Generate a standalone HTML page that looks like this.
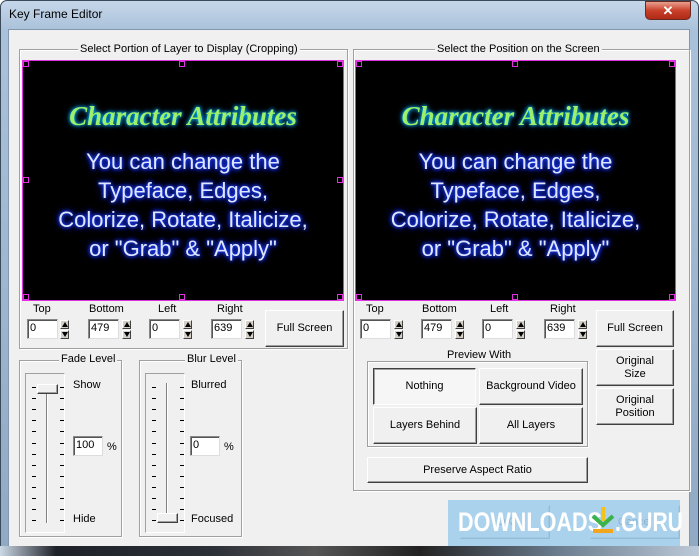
<!DOCTYPE html>
<html><head><style>
*{box-sizing:border-box;margin:0;padding:0}
body{width:699px;height:556px;overflow:hidden;background:#fff;font-family:"Liberation Sans",sans-serif;font-size:11px;color:#000;position:relative}
.a{position:absolute}
.win{left:0;top:0;width:699px;height:556px;background:linear-gradient(#c6d7e9,#a9c1da 30px,#a9c0d8 60px,#90a9c4);border-radius:7px 7px 0 0;border:1px solid #3a4a5a}
.client{left:8px;top:29px;width:682px;height:518px;background:#f0f0f0;border:1px solid #8297ad}
.bottom{left:0;top:546px;width:699px;height:10px;background:linear-gradient(90deg,#cbd8e6,#1e2128 8%,#2b2f36 30%,#555 45%,#222 60%,#6b7d8f 80%,#bcc9d8)}
.grp{border:1px solid #a0a0a0;box-shadow:1px 1px 0 #fff inset,1px 1px 0 #fff}
.lg{background:#f0f0f0;padding:0 2px;white-space:nowrap}
.prev{background:#000;border:1px solid #e030e0}
.h{position:absolute;width:6px;height:6px;border:1px solid #e030e0}
.t{position:absolute;left:0;width:100%;text-align:center;white-space:nowrap}
.ca{font-family:"Liberation Serif",serif;font-style:italic;font-weight:bold;font-size:27px;color:#9ef06a;text-shadow:0 0 3px #00c8ff,0 0 6px #0090ff}
.bl{font-size:22px;color:#dfe6ff;text-shadow:0 0 3px #2040ff,0 0 5px #2040ff,0 0 8px #0020ff}
.in{position:absolute;height:20px;width:31px;background:#fff;border:1px solid #888;border-right-color:#ddd;border-bottom-color:#ddd;box-shadow:inset 1px 1px 0 #555;padding:2px 2px;font-size:11px}
.sp{position:absolute;width:9px;height:20px}
.sp i{display:block;width:9px;height:9px;background:#d4d0c8;border:1px solid;border-color:#fff #404040 #404040 #fff;margin-bottom:1px;position:relative}
.sp i:after{content:"";position:absolute;left:1px;top:1px;border-left:3px solid transparent;border-right:3px solid transparent}
.sp i.u:after{border-bottom:5px solid #000}
.sp i.d:after{border-top:5px solid #000}
.btn{position:absolute;background:#f0f0f0;border:1px solid;border-color:#fff #404040 #404040 #fff;box-shadow:inset -1px -1px 0 #a0a0a0;display:flex;align-items:center;justify-content:center;text-align:center;font-size:11px;line-height:13px}
.lab{position:absolute;font-size:11px;white-space:nowrap}
.sl{border:1px solid;border-color:#a0a0a0 #fff #fff #a0a0a0}
.tick{position:absolute;width:4px;height:1px;background:#000}
.wm{position:absolute;font-size:27px;font-weight:bold;color:#fff;white-space:nowrap;transform-origin:0 0}
</style></head><body>
<div class="a win"></div>
<div class="a" style="left:9px;top:7px;font-size:12px;color:#000">Key Frame Editor</div>
<div class="a" style="left:645px;top:1px;width:46px;height:19px;border-radius:0 0 5px 5px;background:linear-gradient(#e8a090,#c9402a 50%,#b02a15);border:1px solid #6b2a20;color:#fff;font-weight:bold;font-size:13px;text-align:center;line-height:17px">✕</div>
<div class="a client"></div>
<div class="a bottom"></div>

<div class="a grp" style="left:19px;top:49px;width:329px;height:300px"></div>
<div class="a lg" style="left:78px;top:43px">Select Portion of Layer to Display (Cropping)</div>
<div class="a prev" style="left:22px;top:60px;width:322px;height:241px">
 <div class="h" style="left:0;top:0"></div><div class="h" style="left:156px;top:0"></div><div class="h" style="right:0;top:0"></div>
 <div class="h" style="left:0;top:116px"></div><div class="h" style="right:0;top:116px"></div>
 <div class="h" style="left:0;bottom:0"></div><div class="h" style="left:156px;bottom:0"></div><div class="h" style="right:0;bottom:0"></div>
 <div class="t ca" style="top:40px">Character Attributes</div>
 <div class="t bl" style="top:88px">You can change the</div>
 <div class="t bl" style="top:117px">Typeface, Edges,</div>
 <div class="t bl" style="top:146px">Colorize, Rotate, Italicize,</div>
 <div class="t bl" style="top:175px">or "Grab" &amp; "Apply"</div>
</div>
<div class="lab" style="left:33px;top:303px">Top</div>
<div class="lab" style="left:89px;top:303px">Bottom</div>
<div class="lab" style="left:158px;top:303px">Left</div>
<div class="lab" style="left:217px;top:303px">Right</div>
<div class="in" style="left:27px;top:319px">0</div><div class="sp" style="left:60px;top:320px"><i class="u"></i><i class="d"></i></div>
<div class="in" style="left:88px;top:319px">479</div><div class="sp" style="left:122px;top:320px"><i class="u"></i><i class="d"></i></div>
<div class="in" style="left:149px;top:319px">0</div><div class="sp" style="left:183px;top:320px"><i class="u"></i><i class="d"></i></div>
<div class="in" style="left:211px;top:319px">639</div><div class="sp" style="left:245px;top:320px"><i class="u"></i><i class="d"></i></div>
<div class="btn" style="left:265px;top:310px;width:79px;height:37px">Full Screen</div>

<div class="a grp" style="left:19px;top:360px;width:103px;height:177px"></div>
<div class="a lg" style="left:59px;top:353px">Fade Level</div>
<div class="a sl" style="left:25px;top:373px;width:40px;height:160px"></div>
<div class="a" style="left:46px;top:393px;width:2px;height:130px;border-left:1px solid #808080;border-right:1px solid #fff"></div>
<div class="btn" style="left:37px;top:384px;width:21px;height:10px"></div>
<div class="lab" style="left:73px;top:379px">Show</div>
<div class="lab" style="left:73px;top:513px">Hide</div>
<div class="in" style="left:73px;top:436px;width:30px">100</div>
<div class="lab" style="left:107px;top:441px">%</div>

<div class="a grp" style="left:139px;top:360px;width:103px;height:177px"></div>
<div class="a lg" style="left:185px;top:353px">Blur Level</div>
<div class="a sl" style="left:145px;top:373px;width:40px;height:160px"></div>
<div class="a" style="left:166px;top:383px;width:2px;height:135px;border-left:1px solid #808080;border-right:1px solid #fff"></div>
<div class="btn" style="left:157px;top:513px;width:21px;height:10px"></div>
<div class="lab" style="left:191px;top:379px">Blurred</div>
<div class="lab" style="left:191px;top:513px">Focused</div>
<div class="in" style="left:190px;top:436px;width:30px">0</div>
<div class="lab" style="left:224px;top:441px">%</div>

<div class="a grp" style="left:353px;top:49px;width:337px;height:442px"></div>
<div class="a lg" style="left:435px;top:43px">Select the Position on the Screen</div>
<div class="a prev" style="left:355px;top:60px;width:321px;height:241px">
 <div class="h" style="left:0;top:0"></div><div class="h" style="left:156px;top:0"></div><div class="h" style="right:0;top:0"></div>
 <div class="h" style="left:0;bottom:0"></div><div class="h" style="left:156px;bottom:0"></div><div class="h" style="right:0;bottom:0"></div>
 <div class="t ca" style="top:40px">Character Attributes</div>
 <div class="t bl" style="top:88px">You can change the</div>
 <div class="t bl" style="top:117px">Typeface, Edges,</div>
 <div class="t bl" style="top:146px">Colorize, Rotate, Italicize,</div>
 <div class="t bl" style="top:175px">or "Grab" &amp; "Apply"</div>
</div>
<div class="lab" style="left:366px;top:303px">Top</div>
<div class="lab" style="left:422px;top:303px">Bottom</div>
<div class="lab" style="left:490px;top:303px">Left</div>
<div class="lab" style="left:550px;top:303px">Right</div>
<div class="in" style="left:360px;top:319px">0</div><div class="sp" style="left:394px;top:320px"><i class="u"></i><i class="d"></i></div>
<div class="in" style="left:421px;top:319px">479</div><div class="sp" style="left:455px;top:320px"><i class="u"></i><i class="d"></i></div>
<div class="in" style="left:482px;top:319px">0</div><div class="sp" style="left:516px;top:320px"><i class="u"></i><i class="d"></i></div>
<div class="in" style="left:544px;top:319px">639</div><div class="sp" style="left:578px;top:320px"><i class="u"></i><i class="d"></i></div>
<div class="btn" style="left:596px;top:310px;width:78px;height:37px">Full Screen</div>
<div class="btn" style="left:596px;top:349px;width:78px;height:37px">Original<br>Size</div>
<div class="btn" style="left:596px;top:388px;width:78px;height:37px">Original<br>Position</div>

<div class="a grp" style="left:367px;top:361px;width:221px;height:86px"></div>
<div class="a lg" style="left:445px;top:349px">Preview With</div>
<div class="btn" style="left:373px;top:368px;width:103px;height:37px;border-color:#404040 #fff #fff #404040;box-shadow:inset 1px 1px 0 #a0a0a0;background:#f6f6f6">Nothing</div>
<div class="btn" style="left:479px;top:368px;width:104px;height:37px">Background Video</div>
<div class="btn" style="left:373px;top:407px;width:104px;height:37px">Layers Behind</div>
<div class="btn" style="left:479px;top:407px;width:104px;height:37px">All Layers</div>
<div class="btn" style="left:367px;top:457px;width:221px;height:26px">Preserve Aspect Ratio</div>

<div class="btn" style="left:460px;top:505px;width:90px;height:34px">OK</div>
<div class="btn" style="left:590px;top:505px;width:90px;height:34px">Cancel</div>
<div class="a" style="left:448px;top:500px;width:232px;height:46px;background:rgba(160,205,235,0.88)"></div>
<div class="wm" style="left:458px;top:507px;transform:scaleX(0.8)">DOWNLOADS</div>
<svg class="a" style="left:590px;top:505px" width="26" height="30" viewBox="0 0 26 30"><path d="M13 2v14" stroke="#f3c21b" stroke-width="4"/><path d="M3 11l10 9 10-9" stroke="#3bb24a" stroke-width="4" fill="none"/><rect x="3" y="24" width="20" height="4" fill="#f3a61b"/></svg>
<div class="wm" style="left:615px;top:507px;transform:scaleX(0.78)">.GURU</div>
<script>
function ticks(x0,x1,top){for(var i=0;i<13;i++){var y=top+i*11.1;[x0,x1].forEach(function(x){var d=document.createElement('div');d.className='tick';d.style.left=x+'px';d.style.top=Math.round(y)+'px';document.body.appendChild(d);});}}
ticks(32,60,387);ticks(152,180,387);
</script>
</body></html>
